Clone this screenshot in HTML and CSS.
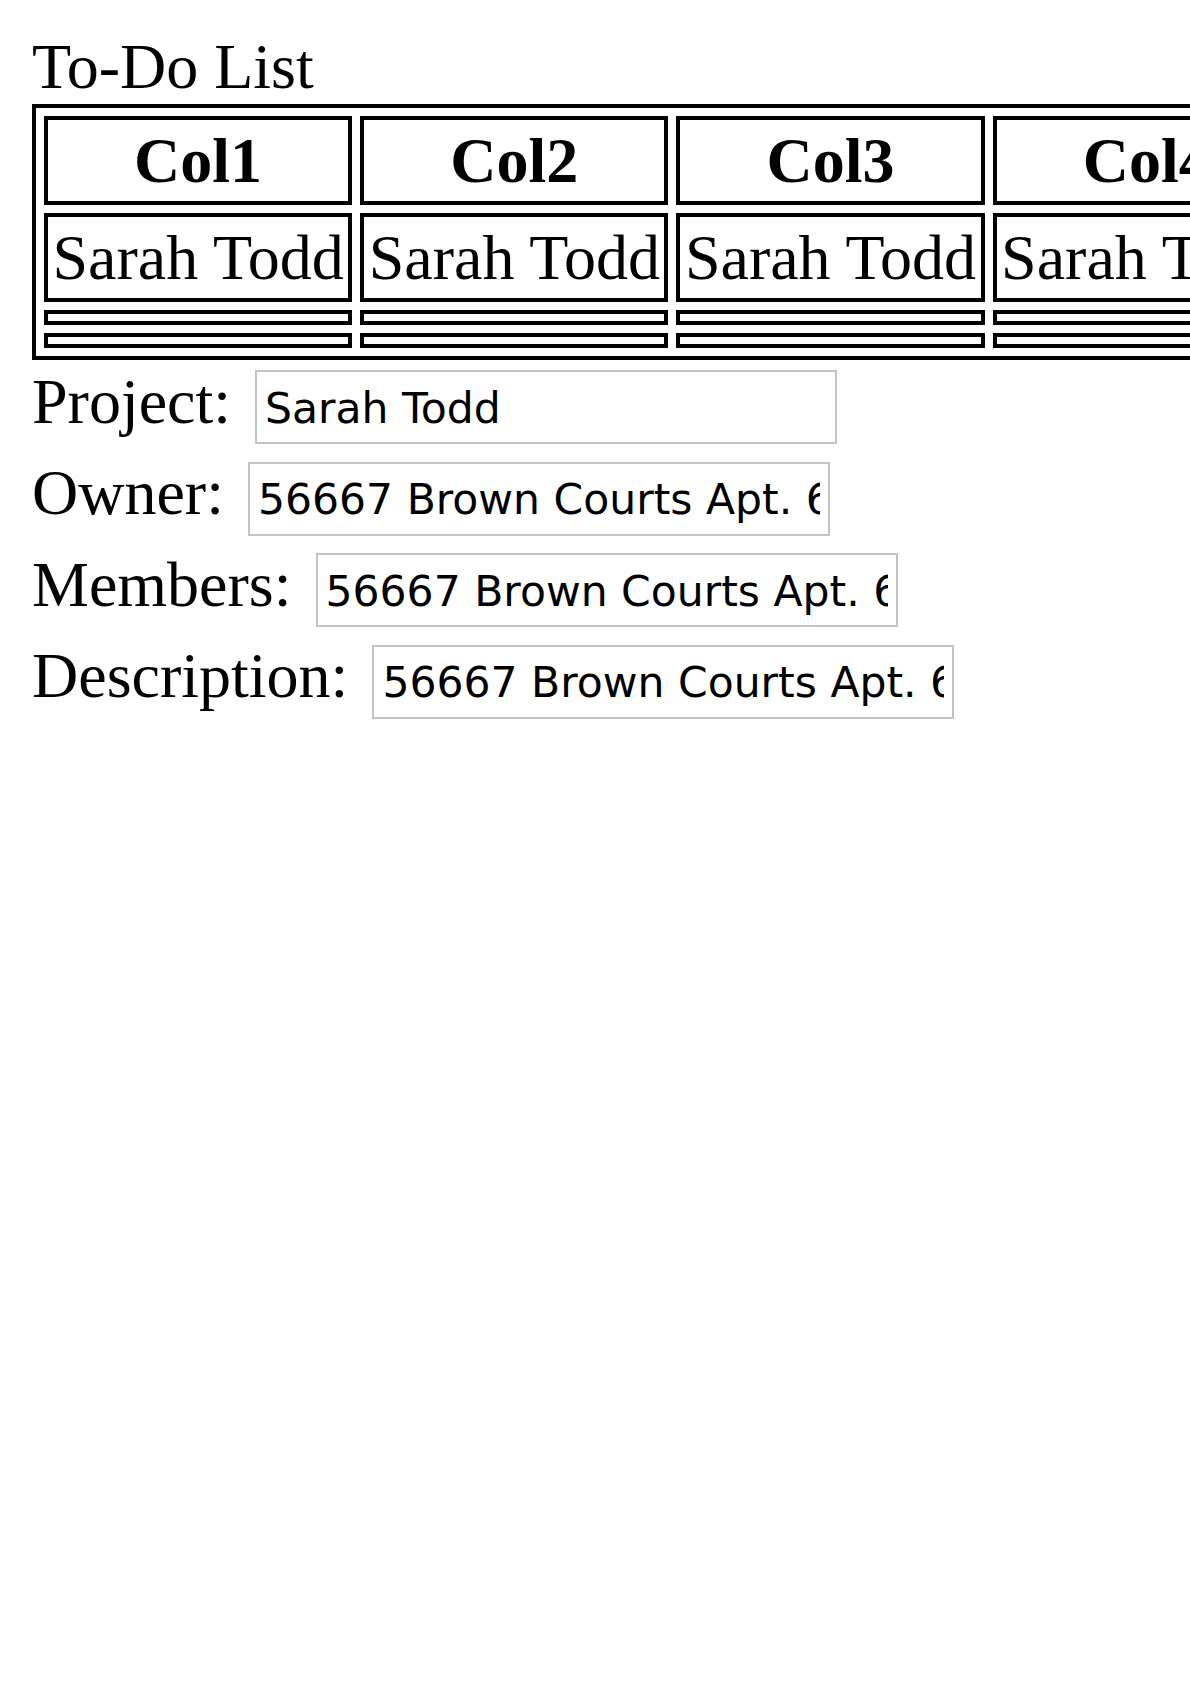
FILE: index.html
```html
<!DOCTYPE html>
<html lang="en">
<head>
<meta charset="utf-8">
<title>To-Do List</title>
<link rel="stylesheet" href="styles.css">
</head>
<body>
<div class="title">To-Do List</div>
<table class="todo">
  <tr>
    <th>Col1</th><th>Col2</th><th>Col3</th><th>Col4</th><th>Col5</th>
  </tr>
  <tr>
    <td>Sarah Todd</td><td>Sarah Todd</td><td>Sarah Todd</td><td>Sarah Todd</td><td>Sarah Todd</td>
  </tr>
  <tr>
    <td></td><td></td><td></td><td></td><td></td>
  </tr>
  <tr>
    <td></td><td></td><td></td><td></td><td></td>
  </tr>
</table>
<div class="fields">
  <div class="field"><label for="project">Project:</label><input id="project" type="text" value="Sarah Todd"></div>
  <div class="field"><label for="owner">Owner:</label><input id="owner" type="text" value="56667 Brown Courts Apt. 626"></div>
  <div class="field"><label for="members">Members:</label><input id="members" type="text" value="56667 Brown Courts Apt. 626"></div>
  <div class="field"><label for="description">Description:</label><input id="description" type="text" value="56667 Brown Courts Apt. 626"></div>
</div>
</body>
</html>
```
FILE: styles.css
```css
html {
  background: #fff;
}

body {
  margin: 30px 0 0 32px;
  overflow-x: hidden;
  font-family: "Liberation Serif", "Times New Roman", serif;
  font-size: 64px;
  color: #000;
  background: #fff;
}

.title {
  font-size: 64px;
  font-weight: normal;
  line-height: normal;
  margin: 0;
}

.todo {
  border: 4px solid #000;
  border-collapse: separate;
  border-spacing: 8px;
}

.todo th,
.todo td {
  border: 4px solid #000;
  padding: 3.5px 4.5px;
  font-size: 64px;
  line-height: normal;
  white-space: nowrap;
}

.todo th {
  font-weight: bold;
  text-align: center;
}

.fields {
  margin-top: 4.5px;
  display: flex;
  flex-direction: column;
  gap: 12px;
}

.field {
  display: flex;
  align-items: baseline;
}

.field label {
  font-size: 64px;
  line-height: normal;
  white-space: nowrap;
}

.field input {
  margin: 0 0 0 24px;
  width: 582px;
  height: 74px;
  box-sizing: border-box;
  border: 2px solid #c4c4c4;
  border-radius: 0;
  padding: 2px 8px 0;
  font-family: "DejaVu Sans", "Verdana", sans-serif;
  font-size: 42.5px;
  color: #000;
  background: #fff;
  outline: none;
}
```
